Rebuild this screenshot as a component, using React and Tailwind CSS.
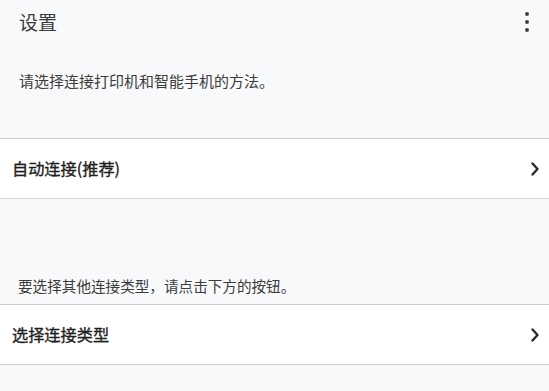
function Chevron() {
  return (
    <svg width="10" height="16" viewBox="0 0 10 16" className="text-[#2a2a2a]">
      <path d="M2.5 2.5 L7.5 8 L2.5 13.5" fill="none" stroke="currentColor" strokeWidth="2.4" strokeLinecap="round" strokeLinejoin="round" />
    </svg>
  );
}

function Row({ label }) {
  return (
    <div className="flex h-[61px] items-center justify-between border-y border-[#cfcfcf] bg-white pl-[12px] pr-[9px]">
      <span className="text-[16.2px] font-normal text-[#1e1e1e] [-webkit-text-stroke:0.35px_#1e1e1e]">{label}</span>
      <Chevron />
    </div>
  );
}

export default function App() {
  const font = { fontFamily: '"Noto Sans CJK SC", "Noto Sans", sans-serif' };
  return (
    <div className="h-[391px] w-[549px] overflow-hidden bg-[#f8f9fa]" style={font}>
      <div className="flex h-[44px] items-center justify-between pl-[19px] pr-[20px]">
        <h1 className="text-[19px] font-normal text-[#3a3a3a]">设置</h1>
        <div className="flex flex-col gap-[4px]">
          <span className="block h-[4px] w-[4px] rounded-full bg-[#444]" />
          <span className="block h-[4px] w-[4px] rounded-full bg-[#444]" />
          <span className="block h-[4px] w-[4px] rounded-full bg-[#444]" />
        </div>
      </div>
      <div className="flex h-[94px] items-start pl-[19px] pt-[26px]">
        <p className="text-[15px] text-[#3c3c3c]">请选择连接打印机和智能手机的方法。</p>
      </div>
      <Row label="自动连接(推荐)" />
      <div className="flex h-[105px] items-end pb-[7px] pl-[18px]">
        <p className="text-[14.6px] text-[#3c3c3c]">要选择其他连接类型，请点击下方的按钮。</p>
      </div>
      <Row label="选择连接类型" />
    </div>
  );
}
